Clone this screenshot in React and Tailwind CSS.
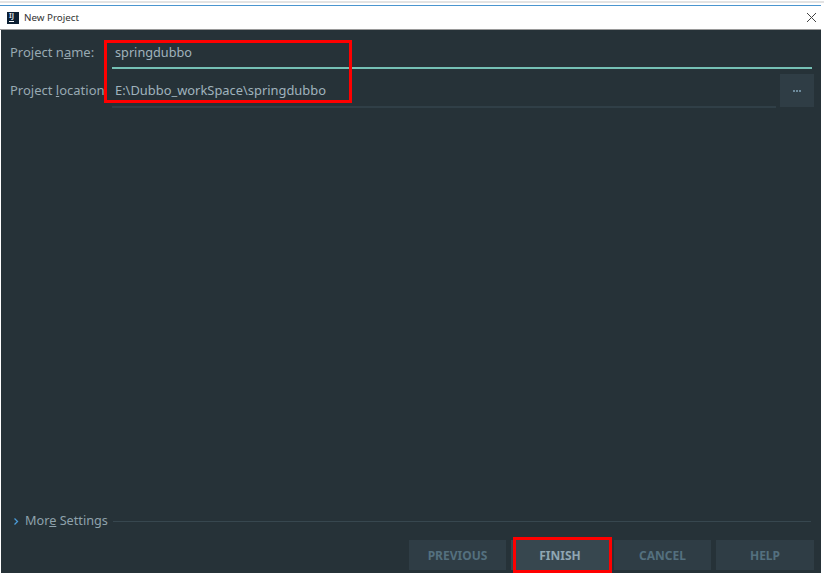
import React from "react";

const font = { fontFamily: '"Noto Sans", "Open Sans", sans-serif' };

const FooterButton = ({ label, active, width }) => (
  <button
    className={`h-[30px] pt-[1px] ${width} text-[12px] font-bold ${
      active ? "bg-[#37474f] text-[#8fa6b3]" : "bg-[#2f3d45] text-[#54707f]"
    }`}
  >
    {label}
  </button>
);

const App = () => {
  return (
    <div className="w-[824px] h-[576px] bg-white overflow-hidden relative" style={font}>
      <div className="h-[2px] mt-[1px] bg-[#e3e3e3]" />
      <div className="h-[1px] mt-[2px] w-[821px] bg-[#4a95cf]" />

      {/* Title bar */}
      <div className="w-[821px] h-[24px] flex items-center pl-[7px] pr-[5px] border-b border-[#9a9a9a]">
        <div className="w-[12px] h-[12px] shrink-0 bg-[#0d2033] flex flex-col items-start justify-center pl-[2px]">
          <span className="text-[7px] leading-[6px] font-bold text-[#d8dde2]">IJ</span>
          <div className="w-[5px] h-[1px] bg-white mt-[2px]" />
        </div>
        <span className="ml-[5px] pt-[1px] text-[9.8px] text-[#333333]">New Project</span>
        <svg className="ml-auto" width="9" height="9" viewBox="0 0 9 9">
          <path d="M0 0 L9 9 M9 0 L0 9" stroke="#444" strokeWidth="1" fill="none" />
        </svg>
      </div>

      {/* Dialog body */}
      <div className="w-[820px] h-[543px] ml-[1px] bg-[#263238] flex flex-col text-[#98a9b2] text-[13px]">
        <div className="flex items-start h-[38px] pl-[9px]">
          <label className="w-[102px] mt-[13px] leading-[18px]">
            Project n<span className="underline">a</span>me:
          </label>
          <div className="w-[700px] h-[39px] border-b-2 border-[#75c0b5] pl-[3px] pt-[13px] leading-[18px] text-[12.7px] text-[#a0b3bd]">
            springdubbo
          </div>
        </div>
        <div className="flex items-start h-[40px] pl-[9px] mt-[1px]">
          <label className="w-[102px] mt-[12px] leading-[18px] whitespace-nowrap">
            Project <span className="underline">l</span>ocation
          </label>
          <div className="w-[664px] h-[39px] border-b-2 border-[#303f47] pl-[3px] pt-[12px] leading-[18px] text-[12.9px] text-[#a0b3bd]">
            E:\Dubbo_workSpace\springdubbo
          </div>
          <div className="ml-[4px] mt-[5px] w-[34px] h-[33px] bg-[#2f3d45] flex items-center justify-center gap-[1px]">
            <i className="w-[2px] h-[2px] bg-[#6d8a9b]" />
            <i className="w-[2px] h-[2px] bg-[#6d8a9b]" />
            <i className="w-[2px] h-[2px] bg-[#6d8a9b]" />
          </div>
        </div>

        <div className="flex-1" />

        {/* More settings */}
        <div className="flex items-center h-[18px] pl-[12px] pr-[10px]">
          <svg width="6" height="7" viewBox="0 0 6 7">
            <path d="M1.5 0.5 L4.5 3.5 L1.5 6.5" stroke="#4a9bd8" strokeWidth="1.3" fill="none" />
          </svg>
          <span className="ml-[6px] text-[12.7px] text-[#8fa2ac] whitespace-nowrap">
            Mor<span className="underline">e</span> Settings
          </span>
          <div className="flex-1 h-[1px] ml-[5px] bg-[#37474f]" />
        </div>

        <div className="flex justify-end gap-[5px] pr-[7px] mt-[10px] mb-[3px]">
          <FooterButton label="PREVIOUS" width="w-[97px]" />
          <FooterButton label="FINISH" active width="w-[98px]" />
          <FooterButton label="CANCEL" width="w-[97px]" />
          <FooterButton label="HELP" width="w-[98px]" />
        </div>
      </div>

      {/* Red annotation boxes drawn over the screenshot */}
      <div className="absolute left-[104px] top-[40px] w-[248px] h-[63px] border-[3px] border-[#ff0000]" />
      <div className="absolute left-[513px] top-[537px] w-[99px] h-[36px] border-[3px] border-[#ff0000]" />
    </div>
  );
};

export default App;
